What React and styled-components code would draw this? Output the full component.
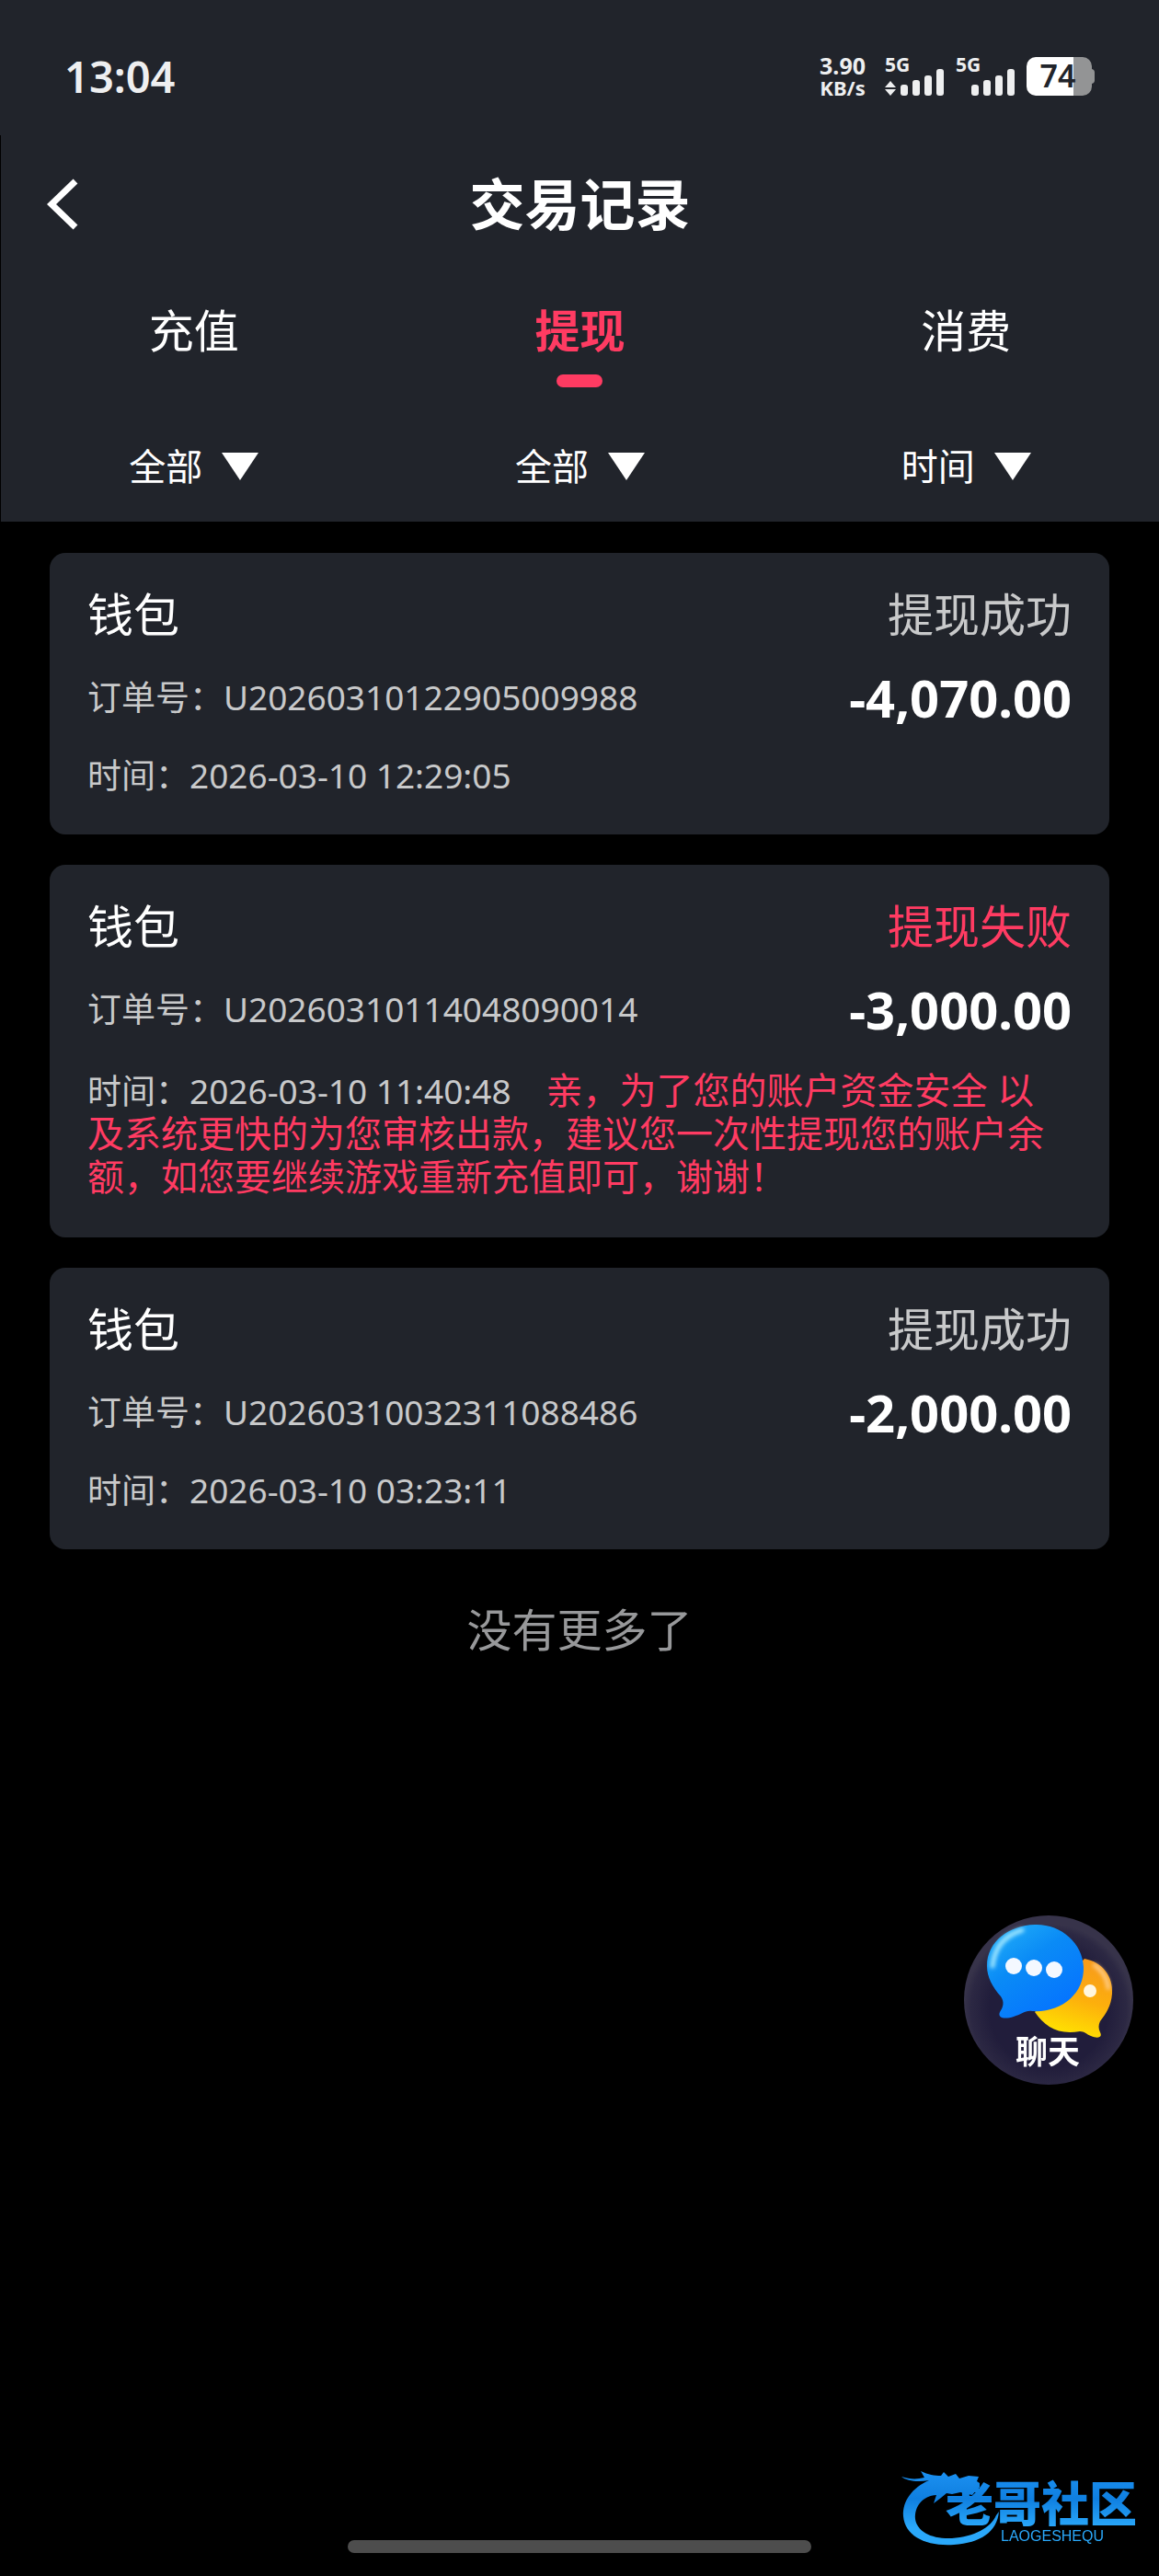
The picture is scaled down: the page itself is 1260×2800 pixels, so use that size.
import React from "react"
import styled, { createGlobalStyle, css } from "styled-components"

const colors = {
  page: "#000000",
  panel: "#21242b",
  white: "#ffffff",
  status: "#eeeff0",
  muted: "#c8c9ca",
  faint: "#97989a",
  accent: "#ff3b62",
}

const sizes = {
  gutter: 54,
  cardPadding: 41,
  cardGap: 33,
}

const GlobalStyle = createGlobalStyle`
  * {
    box-sizing: border-box;
  }
  body {
    margin: 0;
    background: ${colors.page};
    color: ${colors.white};
    font-family: "Noto Sans", "Noto Sans CJK SC", sans-serif;
  }
  h1, h2, p, ul {
    margin: 0;
    padding: 0;
  }
  button {
    padding: 0;
    border: 0;
    background: none;
    color: inherit;
    font: inherit;
    cursor: pointer;
  }
`

const Screen = styled.div`
  display: flex;
  flex-direction: column;
  min-height: 100vh;
`

const StatusBar = styled.div`
  display: flex;
  align-items: center;
  justify-content: space-between;
  height: 147px;
  padding: 19px 70px 0;
  background: ${colors.panel};
  color: ${colors.status};
`

const Clock = styled.time`
  font-size: 47px;
  font-weight: 600;
  line-height: 48px;
`

const StatusIcons = styled.div`
  display: flex;
  align-items: center;
`

const NetSpeed = styled.div`
  display: flex;
  flex-direction: column;
  margin-right: 21px;
  font-size: 22px;
  font-weight: 700;
  line-height: 24px;
  text-align: center;
`

const Speed = styled.span`
  font-size: 25px;
`

const Signal = styled.svg`
  display: block;
  width: 66px;
  height: 66px;
  margin-right: 11px;
  fill: ${colors.status};
  font-size: 21px;
  font-weight: 700;
`

const Battery = styled.svg`
  display: block;
  width: 74px;
  height: 66px;
  font-size: 34px;
  font-weight: 600;
`

const Header = styled.header`
  border-left: 1px solid ${colors.page};
  background: ${colors.panel};
`

const TitleBar = styled.div`
  display: grid;
  grid-template-columns: 120px 1fr 120px;
  align-items: center;
  height: 150px;
`

const BackButton = styled.button`
  display: flex;
  align-items: center;
  height: 100%;
  padding-left: 50px;

  svg {
    width: 34px;
    height: 56px;
  }
`

const Title = styled.h1`
  font-size: 60px;
  font-weight: 700;
  line-height: 80px;
  text-align: center;
`

const Columns = styled.div`
  display: grid;
  grid-template-columns: repeat(3, 1fr);
`

const Tab = styled.button`
  display: flex;
  flex-direction: column;
  align-items: center;
  gap: 16px;
  height: 150px;
  padding-top: 30px;
  font-size: 49px;
  line-height: 64px;

  &::after {
    content: "";
    width: 50px;
    height: 14px;
    border-radius: 7px;
  }

  ${props => props.$active && css`
    color: ${colors.accent};
    font-weight: 700;

    &::after {
      background: ${colors.accent};
    }
  `}
`

const Filter = styled.button`
  display: flex;
  align-items: center;
  justify-content: center;
  gap: 21px;
  height: 120px;
  font-size: 40px;
  line-height: 56px;

  &::after {
    content: "";
    border: 20px solid transparent;
    border-top: 30px solid ${colors.white};
    border-bottom: 0;
  }
`

const RecordList = styled.ul`
  display: flex;
  flex-direction: column;
  gap: ${sizes.cardGap}px;
  padding: 34px ${sizes.gutter}px 0;
  list-style: none;
`

const Card = styled.li`
  display: flex;
  flex-direction: column;
  padding: 32px ${sizes.cardPadding}px 34px;
  border-radius: 17px;
  background: ${colors.panel};
`

const Row = styled.div`
  display: flex;
  align-items: center;
  justify-content: space-between;
`

const Wallet = styled.h2`
  font-size: 50px;
  font-weight: 400;
  line-height: 70px;
`

const Status = styled.span`
  color: ${props => props.$failed ? colors.accent : colors.muted};
  font-size: 50px;
  line-height: 70px;
`

const Detail = styled.p`
  color: ${colors.muted};
  font-size: 37px;
  line-height: 60px;
`

const Amount = styled.strong`
  font-size: 56px;
  line-height: 110px;
`

const TimeLine = styled(Detail)`
  ${props => props.$hasReason && css`
    padding: 10px 8px 8px 0;
    line-height: 46px;
  `}
`

const Reason = styled.span`
  margin-left: 38px;
  color: ${colors.accent};
  font-size: 40px;
`

const EndText = styled.p`
  padding-top: 55px;
  color: ${colors.faint};
  font-size: 49px;
  line-height: 64px;
  text-align: center;
`

const ChatButton = styled.button`
  position: fixed;
  right: 27px;
  bottom: 533px;
  width: 186px;
  height: 186px;
  border-radius: 50%;

  svg {
    display: block;
    width: 100%;
    height: 100%;
    font-size: 35px;
    font-weight: 700;
  }
`

const HomeIndicator = styled.div`
  position: fixed;
  bottom: 25px;
  left: 30%;
  width: 40%;
  height: 14px;
  border-radius: 7px;
  background: #4d4d4d;
`

const Watermark = styled.div`
  position: fixed;
  right: 20px;
  bottom: 30px;
  width: 262px;
  height: 90px;

  svg {
    display: block;
    width: 100%;
    height: 100%;
  }
`

const tabs = ["充值", "提现", "消费"]

const filters = ["全部", "全部", "时间"]

const records = [
  {
    order: "U20260310122905009988",
    time: "2026-03-10 12:29:05",
    amount: "-4,070.00",
  },
  {
    order: "U20260310114048090014",
    time: "2026-03-10 11:40:48",
    amount: "-3,000.00",
    failed: true,
    reason: "亲，为了您的账户资金安全 以及系统更快的为您审核出款，建议您一次性提现您的账户余额，如您要继续游戏重新充值即可，谢谢！",
  },
  {
    order: "U20260310032311088486",
    time: "2026-03-10 03:23:11",
    amount: "-2,000.00",
  },
]

const SignalIcon = ({ transfer }) => (
  <Signal viewBox="0 -12 66 66">
    <text x="0" y="16">5G</text>
    {transfer && <path d="M6 26l6 7H0zM6 42l6-7H0z" />}
    <rect x="17" y="30" width="8" height="12" rx="3" />
    <rect x="30" y="25" width="8" height="17" rx="3" />
    <rect x="43" y="20" width="8" height="22" rx="3" />
    <rect x="56" y="13" width="8" height="29" rx="3" />
  </Signal>
)

const BatteryIcon = () => (
  <Battery viewBox="0 -12 74 66">
    <path d="M51 0h10a10 10 0 0 1 10 10v3a4 4 0 0 1 3 4v8a4 4 0 0 1-3 4v3a10 10 0 0 1-10 10H51z" fill="#939495" />
    <path d="M10 0h41v42H10A10 10 0 0 1 0 32V10A10 10 0 0 1 10 0z" fill="#fff" />
    <text x="34" y="33" textAnchor="middle" fill={colors.panel}>74</text>
  </Battery>
)

const ChatIcon = () => (
  <svg viewBox="0 0 186 186">
    <defs>
      <radialGradient id="disc" cx="0.5" cy="0.55" r="0.5">
        <stop offset="0.7" stopColor="#211d3b" />
        <stop offset="0.92" stopColor="#2c2843" />
        <stop offset="1" stopColor="#37334a" />
      </radialGradient>
      <linearGradient id="blue" x1="0" y1="0" x2="0.7" y2="1">
        <stop offset="0" stopColor="#25b4f8" />
        <stop offset="0.45" stopColor="#0a8bf6" />
        <stop offset="1" stopColor="#0572ff" />
      </linearGradient>
      <linearGradient id="gold" x1="0.7" y1="0" x2="0.4" y2="1">
        <stop offset="0" stopColor="#f79a1c" />
        <stop offset="0.5" stopColor="#fdaf0c" />
        <stop offset="1" stopColor="#ffe500" />
      </linearGradient>
      <filter id="shine" x="-30%" y="-30%" width="160%" height="160%">
        <feGaussianBlur stdDeviation="2" />
      </filter>
    </defs>
    <circle cx="93" cy="93" r="92" fill="url(#disc)" />
    <path
      d="M132 48c20 4 31 19 30 38-1 14-7 22-13 30-2 4-2 8 0 12 3 6-3 7-10 4-5-2-7-5-12-5-24 4-38-5-49-21z"
      fill="url(#gold)"
    />
    <path d="M143 55q13 9 15 25" fill="none" stroke="#ffcf8f" strokeWidth="4" strokeLinecap="round" filter="url(#shine)" />
    <circle cx="138" cy="83" r="7" fill="#fff6e0" />
    <path
      d="M78 11C106 10 130 31 131 57c1 29-24 50-56 48-8-1-12 4-20 6-9 3-18 2-15-5 4-6 5-11 1-17C32 79 26 68 26 56 26 29 50 12 78 11z"
      fill="url(#blue)"
    />
    <path d="M32 56q3-30 32-39" fill="none" stroke="#9fe6ff" strokeWidth="5" strokeLinecap="round" filter="url(#shine)" />
    <circle cx="55" cy="56" r="9" fill="#f4f8ff" />
    <circle cx="77" cy="58" r="9" fill="#f4f8ff" />
    <circle cx="99" cy="60" r="9" fill="#f4f8ff" />
    <text x="92" y="162" textAnchor="middle" fill="#fff">聊天</text>
  </svg>
)

const DragonLogo = () => (
  <svg viewBox="0 0 262 90">
    <defs>
      <linearGradient id="water" x1="0" y1="0" x2="0" y2="90" gradientUnits="userSpaceOnUse">
        <stop offset="0.1" stopColor="#1a8ff0" />
        <stop offset="0.4" stopColor="#0f7fe0" />
        <stop offset="0.75" stopColor="#2aa8fa" />
      </linearGradient>
    </defs>
    <g fill="url(#water)">
      <path d="M2 12c9 3 17 3 25 1l-4-7c8 4 15 5 22 5l3-4 5 5 8-3 4 5 10-3 11 1-2 5 3 2v5l-10-1 6 4-4 5-13-3-9 2-6-1-6 5-8 6 3-9C25 33 16 44 17 58c2 14 18 22 40 21 24-2 42-11 48-25l3-4c-2 22-20 34-49 36C29 88 6 77 4 55 3 38 14 24 32 16 20 18 8 17 2 12z" />
      <text x="50" y="61" fontSize="52" fontWeight="900">老哥社区</text>
      <text x="110" y="82" fontSize="16" fontFamily="Liberation Sans, sans-serif">LAOGESHEQU</text>
    </g>
  </svg>
)

const Record = ({ order, time, amount, failed, reason }) => (
  <Card>
    <Row>
      <Wallet>钱包</Wallet>
      <Status $failed={failed}>{failed ? "提现失败" : "提现成功"}</Status>
    </Row>
    <Row>
      <Detail>订单号：{order}</Detail>
      <Amount>{amount}</Amount>
    </Row>
    <TimeLine $hasReason={!!reason}>
      时间：{time}
      {reason && <Reason>{reason}</Reason>}
    </TimeLine>
  </Card>
)

const App = () => (
  <>
    <GlobalStyle />
    <Screen>
      <StatusBar>
        <Clock>13:04</Clock>
        <StatusIcons>
          <NetSpeed>
            <Speed>3.90</Speed>
            <span>KB/s</span>
          </NetSpeed>
          <SignalIcon transfer />
          <SignalIcon />
          <BatteryIcon />
        </StatusIcons>
      </StatusBar>
      <Header>
        <TitleBar>
          <BackButton aria-label="返回">
            <svg viewBox="0 0 34 56" fill="none" stroke="#fff" strokeWidth="7">
              <path d="M31 3L5 28l26 25" />
            </svg>
          </BackButton>
          <Title>交易记录</Title>
        </TitleBar>
        <Columns>
          {tabs.map(t => <Tab key={t} $active={t === "提现"}>{t}</Tab>)}
        </Columns>
        <Columns>
          {filters.map((f, i) => <Filter key={i}>{f}</Filter>)}
        </Columns>
      </Header>
      <main>
        <RecordList>
          {records.map(r => <Record key={r.order} {...r} />)}
        </RecordList>
        <EndText>没有更多了</EndText>
      </main>
      <ChatButton aria-label="聊天">
        <ChatIcon />
      </ChatButton>
      <Watermark>
        <DragonLogo />
      </Watermark>
      <HomeIndicator />
    </Screen>
  </>
)

export default App
